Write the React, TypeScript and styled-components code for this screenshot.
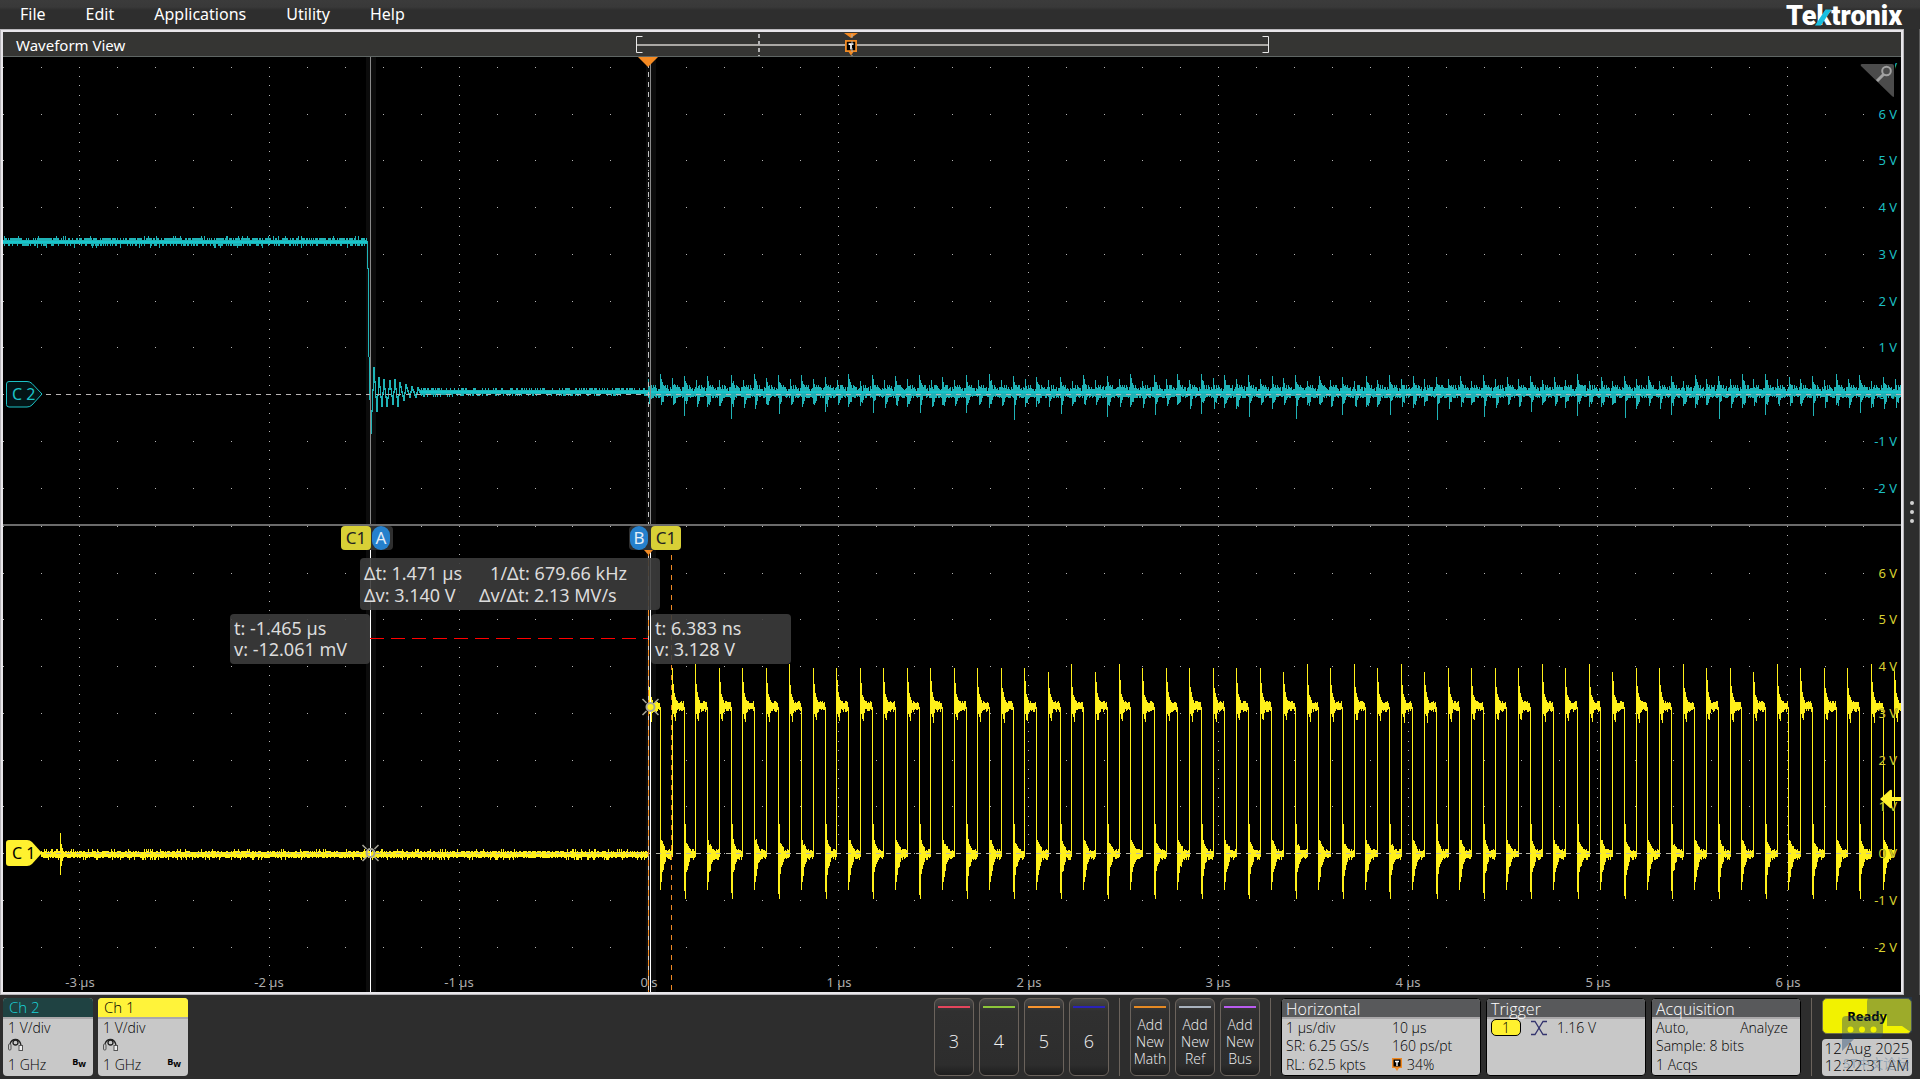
import React from "react";
import styled, { createGlobalStyle, css } from "styled-components";

/* ---------- plot geometry ---------- */

const PLOT_W = 1898;
const UPPER_H = 467;
const LOWER_H = 466;
const DIV_X = 189.8;
const DIV_Y = 46.75;
const FIRST_DIV = 76.5;
const UPPER_ZERO = 337;
const LOWER_ZERO = 327;
const TRIGGER_X = 645;
const CURSOR_A = 367;
const CURSOR_B = 647;
const BIT_PERIOD = 23.51;

const CYAN = "#1fb3b7";
const YELLOW = "#fff01a";

function makeRandom(seed: number) {
  let s = seed;
  return () => {
    s = (s * 1664525 + 1013904223) % 4294967296;
    return s / 4294967296;
  };
}

const column = (x: number, top: number, bottom: number) =>
  `M${x + 0.5} ${Math.round(top)}V${Math.round(bottom)}`;

function gridPath(height: number, zero: number, lastY: number) {
  const parts: string[] = [];
  for (let r = -9; r <= 9; r++) {
    const y = Math.round(zero - r * DIV_Y);
    if (y < 0 || y >= height - 4) continue;
    for (let i = -2; i < 50; i++) {
      const x = Math.round(FIRST_DIV + (i * DIV_X) / 5 - 0.5);
      if (x >= 0 && x < PLOT_W - 30) parts.push(`M${x} ${y + 0.5}h1`);
    }
  }
  for (let c = 0; c < 10; c++) {
    const x = Math.round(FIRST_DIV + c * DIV_X - 0.5);
    for (let k = -45; k < 45; k++) {
      const y = Math.round(zero + (k * DIV_Y) / 5);
      if (y > 0 && y < lastY) parts.push(`M${x} ${y + 0.5}h1`);
    }
  }
  return parts.join("");
}

function channelTwo() {
  const rnd = makeRandom(7);
  const fuzz: string[] = [];
  const core: string[] = [];
  for (let x = 0; x < 364; x++) {
    const up = rnd() < 0.05 ? 4 : rnd() < 0.65 ? 2 : 0;
    const down = rnd() < 0.04 ? 4 : rnd() < 0.4 ? 2 : 0;
    fuzz.push(column(x, 183 - up, 187 + down));
    core.push(column(x, 184, 186));
  }
  fuzz.push(column(364, 184, 212), column(365, 211, 300), column(366, 300, 343));
  const ring: [number, number][] = [
    [367, 343], [368, 376], [371, 311], [374, 354], [376, 321], [379, 349], [381, 323],
    [384, 349], [387, 324], [390, 347], [392, 323], [395, 349], [397, 326], [401, 343],
    [403, 328], [407, 340], [409, 330], [413, 340], [415, 331], [419, 338],
  ];
  for (let i = 1; i < ring.length; i++) {
    const [x0, y0] = ring[i - 1];
    const [x1, y1] = ring[i];
    for (let x = x0; x < x1; x++) {
      const a = y0 + ((y1 - y0) * (x - x0)) / (x1 - x0);
      const b = y0 + ((y1 - y0) * (x + 1 - x0)) / (x1 - x0);
      fuzz.push(column(x, Math.min(a, b) - 1, Math.max(a, b) + 1));
    }
  }
  for (let x = 417; x < TRIGGER_X; x++) {
    const grow = x < 450 ? 1 : 0;
    const up = rnd() < 0.4 ? 2 : 0;
    const down = rnd() < 0.3 ? 2 : 0;
    fuzz.push(column(x, 333 - up, 337 + grow + down));
    core.push(column(x, 334, 336));
  }
  const half = BIT_PERIOD / 2;
  let upPeak = 318;
  let downPeak = 351;
  let edge = -1;
  let downShift = 1;
  for (let x = TRIGGER_X; x < PLOT_W; x++) {
    const t = x - TRIGGER_X;
    const n = Math.floor(t / half);
    if (n !== edge) {
      edge = n;
      upPeak = (n % 2 ? 317 : 321) + Math.round(rnd() * 3);
      downPeak = n % 4 === 3 ? 355 + Math.round(rnd() * 8) : 347 + Math.round(rnd() * 5);
      downShift = rnd() < 0.5 ? 0 : 1;
    }
    const p = Math.floor(t - n * half);
    let top = 332 - Math.floor(rnd() * 3) - (rnd() < 0.15 ? 2 : 0);
    let bottom = 339 + Math.floor(rnd() * 3);
    if (p === 0) top = upPeak;
    if (p === 1) top = upPeak + 4 + rnd() * 4;
    if (p === 2) top = upPeak + 6 + rnd() * 5;
    if (p === 3) top = 328;
    if (p === 5) top = 328;
    if (p === 1) bottom = 344 + rnd() * 5;
    if (p === downShift) bottom = downPeak;
    if (p === 2) bottom = 344 + rnd() * 6;
    if (p === 3) bottom = 342 + rnd() * 4;
    if (p === 9) top += 3;
    fuzz.push(column(x, top, bottom));
    core.push(column(x, 334, 336));
  }
  return { fuzz: fuzz.join(""), core: core.join("") };
}

function channelOne() {
  const rnd = makeRandom(23);
  const out: string[] = [];
  for (let x = 38; x < TRIGGER_X + 1; x++) {
    const up = rnd() < 0.12 ? 3 : rnd() < 0.5 ? 1 : 0;
    const down = rnd() < 0.12 ? 3 : rnd() < 0.5 ? 1 : 0;
    out.push(column(x, 326 - up, 331 + down));
  }
  out.push(column(57, 307, 349), column(58, 318, 340), column(59, 322, 335));
  const bits = Math.ceil((PLOT_W - TRIGGER_X) / BIT_PERIOD);
  for (let b = 0; b < bits; b++) {
    const rise = Math.round(TRIGGER_X + b * BIT_PERIOD + 0.3);
    const fall = Math.round(TRIGGER_X + b * BIT_PERIOD + 12);
    const next = Math.round(TRIGGER_X + (b + 1) * BIT_PERIOD + 0.3);
    const peak = b === 0 ? 160 : b % 2 ? 142 : 138;
    out.push(column(rise, peak + (rnd() < 0.3 ? 4 : 0), 331));
    for (let x = rise + 1; x < fall; x++) {
      const p = x - rise;
      let top = 177 - Math.floor(rnd() * 3);
      let bottom = 183 + Math.floor(rnd() * 4);
      if (p === 1) { top = 154 + rnd() * 8; bottom = 188; }
      if (p === 2) { top = 166 + rnd() * 3; bottom = 190 + rnd() * 4; }
      if (p === 3) { top = 171; bottom = 194 + rnd() * 3; }
      if (p === 4) { top = 174; bottom = 187; }
      out.push(column(x, top, bottom));
    }
    const deep = b % 2 === 1;
    out.push(column(fall, 181, 364 + (deep ? rnd() * 6 : 0)));
    for (let x = fall + 1; x < next; x++) {
      const p = x - fall;
      let top = 325 - Math.floor(rnd() * 3);
      let bottom = 331 + Math.floor(rnd() * 4);
      if (p === 1) { top = deep ? 298 : 314; bottom = deep ? 373 : 356; }
      if (p === 2) { top = 313 + rnd() * 6; bottom = 345 + rnd() * 6; }
      if (p === 3) { top = 318; bottom = 340 + rnd() * 5; }
      if (p === 4) { top = 320; bottom = 337 + rnd() * 4; }
      if (p === 5) { top = 320 + rnd() * 4; bottom = 336; }
      out.push(column(x, top, bottom));
    }
  }
  return out.join("");
}

const CH2 = channelTwo();
const CH1 = channelOne();
const UPPER_GRID = gridPath(UPPER_H, UPPER_ZERO, UPPER_H);
const LOWER_GRID = gridPath(LOWER_H, LOWER_ZERO, 464);

/* ---------- shell ---------- */

const GlobalStyle = createGlobalStyle`
  * { box-sizing: border-box; }
  body {
    margin: 0;
    background: #2d2d2d;
    font-family: "Noto Sans", "Open Sans", sans-serif;
    color: #fff;
  }
  button { font: inherit; color: inherit; border: 0; background: none; padding: 0; cursor: pointer; }
`;

const Screen = styled.div`
  display: flex;
  flex-direction: column;
  min-height: 100vh;
`;

const MenuBar = styled.header`
  display: flex;
  align-items: flex-start;
  justify-content: space-between;
  height: 29px;
  padding: 0 16px 0 20px;
  background: linear-gradient(#3b3b3b 0, #393939 7px, #2e2e2e 10px);
`;

const Menu = styled.nav`
  display: flex;
  gap: 40px;
`;

const MenuButton = styled.button`
  font-size: 16px;
  line-height: 28px;
`;

const Logo = styled.svg`
  display: block;
  width: 118px;
  height: 29px;
  overflow: visible;
  font: 900 27px Roboto, sans-serif;
  fill: #fff;
`;

const Workspace = styled.div`
  flex: 1;
  display: flex;
`;

const Frame = styled.main`
  flex: 1;
  display: flex;
  flex-direction: column;
  padding: 2px;
  border: 1px solid #b9b7bb;
  background: #e8e6ea;
`;

const SideHandle = styled.button`
  display: flex;
  flex-direction: column;
  align-items: center;
  justify-content: center;
  gap: 5px;
  width: 16px;
  border-right: 1px solid #5c5c5c;
`;

const HandleDot = styled.span`
  width: 4px;
  height: 4px;
  border-radius: 2px;
  background: #d0d0d0;
`;

const TitleBar = styled.div`
  display: grid;
  grid-template-columns: 633fr 633fr 632fr;
  align-items: center;
  height: 25px;
  background: #353533;
  border-bottom: 1px solid #5f6664;
`;

const Title = styled.h1`
  margin: 0;
  padding: 2px 0 0 13px;
  font-size: 15px;
  font-weight: 400;
  line-height: 22px;
`;

const Overview = styled.svg`
  display: block;
  width: 100%;
  height: 24px;
`;

const Plots = styled.div`
  flex: 1;
  display: grid;
  grid-template-rows: ${UPPER_H}fr ${LOWER_H}fr;
  row-gap: 2px;
  background: #6b6b6b;
`;

const Plot = styled.section`
  position: relative;
  background: #000;
`;

const Trace = styled.svg`
  position: absolute;
  inset: 0;
  width: 100%;
  height: 100%;
  font-family: "Noto Sans", sans-serif;
  font-size: 13px;
`;

/* ---------- items placed on the plot canvas ---------- */

const at = css<{ $x: number; $y: number; $h: number }>`
  position: absolute;
  left: ${(p) => (p.$x / PLOT_W) * 100}%;
  top: ${(p) => (p.$y / p.$h) * 100}%;
`;

const ZoomCorner = styled.button`
  ${at}
  width: 35px;
  padding-top: 6px;
  background: #000;

  svg { display: block; }
`;

const CursorTag = styled.div`
  ${at}
  display: flex;
  height: 24px;
  border-radius: 4px;
  background: #2f2f2f;
`;

const SourceLabel = styled.span`
  width: 30px;
  border-radius: 4px;
  background: #d8d036;
  color: #222;
  font-size: 17px;
  line-height: 23px;
  text-align: center;
`;

const CursorName = styled.span`
  width: 18px;
  height: 24px;
  margin: 0 3px 0 1px;
  border-radius: 9px;
  background: #2580cc;
  color: #e4eef8;
  font-size: 17px;
  line-height: 24px;
  text-align: center;
`;

const Readout = styled.div<{ $w: number }>`
  ${at}
  width: ${(p) => p.$w}px;
  padding: 4px;
  border-radius: 4px;
  background: rgba(60, 60, 60, 0.9);
  color: #dcdcdc;
  font-size: 18px;
  line-height: 21px;
  white-space: pre;
`;

const DeltaReadout = styled(Readout)`
  line-height: 22px;
`;

/* ---------- settings bar ---------- */

const SettingsBar = styled.footer`
  display: flex;
  justify-content: space-between;
  height: 84px;
  padding: 3px 8px 3px 3px;
  font-family: "Open Sans", "Noto Sans", sans-serif;
  font-weight: 300;
`;

const Group = styled.div<{ $gap: number }>`
  display: flex;
  gap: ${(p) => p.$gap}px;
`;

const Rule = styled.span`
  width: 1px;
  background: #6b635c;
`;

const ChannelBadge = styled.button`
  width: 90px;
  overflow: hidden;
  display: flex;
  flex-direction: column;
  border-radius: 4px;
  background: #c8c8c8;
  color: #000;
  font-size: 15px;
  line-height: 19px;
  text-align: left;
`;

const ChannelName = styled.span<{ $bg: string; $fg: string }>`
  display: block;
  width: 100%;
  height: 21px;
  padding-left: 6px;
  border-bottom: 2px solid #aaa8aa;
  background: ${(p) => p.$bg};
  color: ${(p) => p.$fg};
`;

const ChannelBody = styled.span`
  flex: 1;
  display: grid;
  grid-template-columns: 1fr auto;
  grid-template-rows: 17px 18px 20px;
  align-items: center;
  padding: 0 7px 0 5px;
  width: 100%;
  font-size: 14px;

  svg { display: block; grid-column: 1 / 3; }
  span:first-child { grid-column: 1 / 3; }
`;

const Bandwidth = styled.b`
  font-size: 9px;
  font-weight: 700;
  line-height: 16px;
  align-self: start;

  sub { font-size: 9px; line-height: 0; vertical-align: -2px; }
`;

const SlotButton = styled.button<{ $bar: string }>`
  display: flex;
  flex-direction: column;
  align-items: center;
  width: 40px;
  padding: 7px 0 0;
  border: 1px solid #6b635c;
  border-radius: 6px;
  background: linear-gradient(#474747 0, #303030 12px, #2d2d2d 66px, #1e1e1e 100%);
  color: #f2f2f2;

  &::before {
    content: "";
    flex: none;
    width: 32px;
    height: 2px;
    background: ${(p) => p.$bar};
  }
`;

const SlotNumber = styled.span`
  font-size: 18px;
  line-height: 67px;
`;

const SlotText = styled.span`
  padding-top: 8px;
  font-size: 14px;
  line-height: 17px;
`;

const Panel = styled.button<{ $w: number }>`
  display: flex;
  flex-direction: column;
  width: ${(p) => p.$w}px;
  overflow: hidden;
  border: 1px solid #000;
  border-radius: 4px;
  background: #c8c8c8;
  color: #000;
  text-align: left;
`;

const PanelTitle = styled.span`
  display: block;
  width: 100%;
  height: 20px;
  padding-left: 4px;
  border-bottom: 2px solid #aaa8aa;
  background: #58595b;
  color: #fff;
  font-size: 16px;
  line-height: 20px;
`;

const PanelBody = styled.span<{ $cols: string }>`
  display: grid;
  grid-template-columns: ${(p) => p.$cols};
  grid-template-rows: 17px 19px 19px;
  align-items: center;
  width: 100%;
  padding: 0 12px 0 4px;
  font-size: 14px;
  line-height: 19px;
`;

const WideCell = styled.span`
  grid-column: 1 / -1;
`;

const Inline = styled.span`
  display: flex;
  align-items: center;
  gap: 5px;
`;

const SourcePill = styled.span`
  height: 17px;
  border: 1px solid #000;
  border-radius: 5px;
  background: #fff12f;
  line-height: 15px;
  text-align: center;
`;

const Status = styled.div`
  position: relative;
  display: flex;
  flex-direction: column;
  gap: 5px;
  width: 90px;
`;

const ReadyButton = styled.button`
  height: 36px;
  border: 1px solid #6f6f4a;
  border-radius: 5px;
  background: #f2f200;
  color: #000;
  font-family: "Noto Sans", sans-serif;
  font-size: 13px;
  font-weight: 700;
`;

const Clock = styled.time`
  flex: 1;
  border-radius: 4px;
  background: #c8c8c8;
  color: #000;
  font-size: 15px;
  line-height: 17px;
  padding-top: 1px;
  text-align: center;
  white-space: nowrap;
`;

const Watermark = styled.svg`
  position: absolute;
  inset: -1px 0 auto;
  width: 90px;
  height: 80px;
  pointer-events: none;
  font: 400 13px "Noto Sans", "Noto Sans CJK SC", sans-serif;
`;

/* ---------- pieces ---------- */

const TMark = ({ x, y, scale = 1 }: { x: number; y: number; scale?: number }) => (
  <g transform={`translate(${x} ${y}) scale(${scale})`}>
    <path d="M0 0h10v10h-3l-2 3-2-3h-3z" fill="#f08a24" />
    <path d="M1.5 1.5h7v7h-7z" fill="#000" />
    <path d="M3 3.5h4M5 3v5" stroke="#fff" strokeWidth="1.4" />
  </g>
);

const CursorHit = ({ x, y, fill }: { x: number; y: number; fill: string }) => (
  <g stroke="#a9a79a" strokeWidth="2" fill={fill}>
    <path d={`M${x - 8} ${y - 8}l4 4M${x + 8} ${y - 8}l-4 4M${x - 8} ${y + 8}l4-4M${x + 8} ${y + 8}l-4-4`} strokeWidth="1.500" />
    <circle cx={x} cy={y} r="4" />
  </g>
);

const VoltLabels = ({ zero, color, from }: { zero: number; color: string; from: number }) => (
  <g fill={color} textAnchor="end">
    {Array.from({ length: from + 3 }, (_, i) => from - i).map((v) => (
      <text key={v} x={PLOT_W - 4} y={Math.round(zero - v * DIV_Y) + 5}>{`${v} V`}</text>
    ))}
  </g>
);

const ProbeIcon = () => (
  <svg width="16" height="14" viewBox="0 0 16 14" fill="none" stroke="#222">
    <path d="M2 6C3 2.500 5 1.500 7.500 1.500S12 3 13 7" strokeWidth="1.300" />
    <circle cx="7.500" cy="4.500" r="2.500" strokeWidth="1.300" />
    <rect x="0.500" y="6" width="2.500" height="6" rx="1" stroke="#555" />
    <rect x="11" y="7.500" width="3.500" height="5" stroke="#555" fill="#eee" />
  </svg>
);

const Channel = ({ name, bg, fg }: { name: string; bg: string; fg: string }) => (
  <ChannelBadge type="button">
    <ChannelName $bg={bg} $fg={fg}>{name}</ChannelName>
    <ChannelBody>
      <span>1 V/div</span>
      <ProbeIcon />
      <span>1 GHz</span>
      <Bandwidth>B<sub>w</sub></Bandwidth>
    </ChannelBody>
  </ChannelBadge>
);

const slots = [
  { n: "3", bar: "#e2455c" },
  { n: "4", bar: "#8cc63a" },
  { n: "5", bar: "#f7942f" },
  { n: "6", bar: "#2a22b8" },
];

const adders = [
  { n: "Math", bar: "#e58a24" },
  { n: "Ref", bar: "#a9b3bf" },
  { n: "Bus", bar: "#b95cf0" },
];

const UpperPlot = () => (
  <Plot aria-label="Channel 2">
    <Trace viewBox={`0 0 ${PLOT_W} ${UPPER_H}`} preserveAspectRatio="none">
      <g shapeRendering="crispEdges">
        <path d={`M${CURSOR_A - 4} 0h10v${UPPER_H}h-10zM${CURSOR_B - 4} 0h10v${UPPER_H}h-10z`} fill="#0c0c0c" />
        <path d={UPPER_GRID} stroke="#b4b4b4" />
      </g>
      <VoltLabels zero={UPPER_ZERO} color="#1cbfc2" from={7} />
      <g shapeRendering="crispEdges">
        <path d={CH2.fuzz} stroke={CYAN} />
        <path d={CH2.core} stroke="#18c6cc" />
        <path d={`M43 ${UPPER_ZERO + 0.5}H${PLOT_W}`} stroke="#b9b5b5" strokeDasharray="5 5" />
        <path d={`M${TRIGGER_X + 0.5} 5V${UPPER_H}`} stroke="#c4c4c4" strokeDasharray="5 5" />
        <path d={`M${CURSOR_A + 0.5} 0V${UPPER_H}M${CURSOR_B + 0.5} 0V${UPPER_H}`} stroke="#8a8a8a" />
      </g>
      <path d="M635 0h20l-10 10z" fill="#f58a22" />
      <path d="M6 324.500h18q3 0 5 2l10 10.500-10 11q-2 2-5 2h-18q-2.500 0-2.500-2.500v-20.500q0-2.500 2.500-2.500z" fill="#031416" stroke="#1cc2c6" />
      <text x="9" y="343" fontSize="16" fill="#1cc2c6">C 2</text>
    </Trace>
    <ZoomCorner type="button" aria-label="Zoom" $x={1857} $y={0} $h={UPPER_H}>
      <svg width="35" height="35" viewBox="0 0 35 35" fill="none">
        <path d="M2 1h30q2 0 2 2v30q0 2-2 0L1 3q-1-2 1-2z" fill="#4b4b4b" />
        <circle cx="26.500" cy="8" r="4.300" stroke="#a2a2a2" strokeWidth="2" />
        <path d="M23.500 11.500L17 18" stroke="#a2a2a2" strokeWidth="3" />
      </svg>
    </ZoomCorner>
  </Plot>
);

const LowerPlot = () => (
  <Plot aria-label="Channel 1">
    <Trace viewBox={`0 0 ${PLOT_W} ${LOWER_H}`} preserveAspectRatio="none">
      <g shapeRendering="crispEdges">
        <path d={`M${CURSOR_A - 4} 0h10v${LOWER_H}h-10zM${CURSOR_B - 4} 0h10v${LOWER_H}h-10z`} fill="#0c0c0c" />
        <path d={LOWER_GRID} stroke="#b4b4b4" />
        <path d={CH1} stroke={YELLOW} />
        <path d={`M43 ${LOWER_ZERO + 0.5}H${PLOT_W - 30}`} stroke="#b5b5a8" strokeDasharray="5 5" />
        <path d={`M${TRIGGER_X + 0.5} 24V${LOWER_H}`} stroke="#f08a24" strokeDasharray="6 4" />
        <path d={`M${TRIGGER_X + 0.5} 30V${LOWER_H}`} stroke="#d8d0c8" strokeDasharray="4 6" />
        <path d={`M668.500 29V${LOWER_H}`} stroke="#f08a24" strokeDasharray="5 5" />
        <path d={`M${CURSOR_A + 0.5} 0V${LOWER_H}M${CURSOR_B + 0.5} 0V${LOWER_H}`} stroke="#fff" />
        <path d={`M${CURSOR_A} 112.500H${TRIGGER_X}`} stroke="#ff0000" strokeDasharray="14 7" />
      </g>
      <g stroke="#000" strokeOpacity="0.5" paintOrder="stroke">
        <VoltLabels zero={LOWER_ZERO} color="#d9d130" from={6} />
      </g>
      <g fill="#adadad" textAnchor="middle">
        {Array.from({ length: 10 }, (_, i) => i - 3).map((t) => (
          <text key={t} x={Math.round(FIRST_DIV + (t + 3) * DIV_X)} y={461}>{t === 0 ? "0 s" : `${t} µs`}</text>
        ))}
      </g>
      <CursorHit x={CURSOR_A + 0.5} y={LOWER_ZERO} fill="none" />
      <CursorHit x={CURSOR_B + 0.5} y={181} fill="#fff01a" />
      <path d="M641 24h9l-4.500 5z" fill="#f08a24" />
      <path d="M1877 273l10-9q2-1 2 1v6h9v4h-9v6q0 2-2 1z" fill="#fff12f" />
      <path d="M6 314h18q3 0 5 2l10 11-10 11q-2 2-5 2h-18q-3 0-3-3v-20q0-3 3-3z" fill="#fff12f" />
      <text x="9" y="333" fontSize="16" fill="#000">C 1</text>
    </Trace>
    <CursorTag $x={338} $y={0} $h={LOWER_H}>
      <SourceLabel>C1</SourceLabel>
      <CursorName>A</CursorName>
    </CursorTag>
    <CursorTag $x={626} $y={0} $h={LOWER_H}>
      <CursorName>B</CursorName>
      <SourceLabel>C1</SourceLabel>
    </CursorTag>
    <DeltaReadout $x={357} $y={32} $h={LOWER_H} $w={300}>
      {"Δt: 1.471 µs      1/Δt: 679.66 kHz\nΔv: 3.140 V     Δv/Δt: 2.13 MV/s"}
    </DeltaReadout>
    <Readout $x={227} $y={88} $h={LOWER_H} $w={140}>{"t: -1.465 µs\nv: -12.061 mV"}</Readout>
    <Readout $x={648} $y={88} $h={LOWER_H} $w={140}>{"t: 6.383 ns\nv: 3.128 V"}</Readout>
  </Plot>
);

export default function App() {
  return (
    <Screen>
      <GlobalStyle />
      <MenuBar>
        <Menu>
          {["File", "Edit", "Applications", "Utility", "Help"].map((m) => (
            <MenuButton key={m} type="button">{m}</MenuButton>
          ))}
        </Menu>
        <Logo viewBox="0 0 118 29" role="img" aria-label="Tektronix">
          <text x="0" y="25">Tektronix</text>
          <path d="M29 25.500L39.500 9.500h6L35 25.500z" fill="#18bfe0" />
        </Logo>
      </MenuBar>

      <Workspace>
        <Frame>
          <TitleBar>
            <Title>Waveform View</Title>
            <Overview viewBox="0 0 633 24" preserveAspectRatio="none">
              <path d="M1 13h631" stroke="#aaa8a4" strokeWidth="2" />
              <path d="M6.500 4.500h-6v16h6M626.500 4.500h6v16h-6" fill="none" stroke="#e8e8e8" />
              <path d="M123 2v22" stroke="#b4b4b4" strokeWidth="2" strokeDasharray="4 3" />
              <path d="M208 1h14l-7 5z" fill="#f58a22" />
              <TMark x={209} y={8} scale={1.2} />
              <path d="M216 2v22" stroke="#b4b4b4" strokeWidth="1" strokeDasharray="4 3" />
            </Overview>
            <span />
          </TitleBar>
          <Plots>
            <UpperPlot />
            <LowerPlot />
          </Plots>
        </Frame>
        <SideHandle type="button" aria-label="Results bar">
          <HandleDot />
          <HandleDot />
          <HandleDot />
        </SideHandle>
      </Workspace>

      <SettingsBar>
        <Group $gap={5}>
          <Channel name="Ch 2" bg="#1f4242" fg="#19d3d8" />
          <Channel name="Ch 1" bg="#fff33a" fg="#000" />
        </Group>
        <Group $gap={10}>
          <Group $gap={5}>
            {slots.map((s) => (
              <SlotButton key={s.n} type="button" $bar={s.bar}>
                <SlotNumber>{s.n}</SlotNumber>
              </SlotButton>
            ))}
          </Group>
          <Rule />
          <Group $gap={5}>
            {adders.map((s) => (
              <SlotButton key={s.n} type="button" $bar={s.bar}>
                <SlotText>Add<br />New<br />{s.n}</SlotText>
              </SlotButton>
            ))}
          </Group>
          <Rule />
          <Group $gap={5}>
            <Panel type="button" $w={200}>
              <PanelTitle>Horizontal</PanelTitle>
              <PanelBody $cols="106px 1fr">
                <span>1 µs/div</span>
                <span>10 µs</span>
                <span>SR: 6.25 GS/s</span>
                <span>160 ps/pt</span>
                <span>RL: 62.5 kpts</span>
                <Inline>
                  <svg width="10" height="13" viewBox="0 0 10 13"><TMark x={0} y={0} /></svg>
                  34%
                </Inline>
              </PanelBody>
            </Panel>
            <Panel type="button" $w={160}>
              <PanelTitle>Trigger</PanelTitle>
              <PanelBody $cols="30px 36px 1fr">
                <SourcePill>1</SourcePill>
                <svg width="36" height="16" viewBox="0 0 36 16" fill="none" stroke="#34346e" strokeWidth="1.300">
                  <path d="M10 1.500h4l8 13h4M10 14.500h4l8-13h4" />
                </svg>
                <span>1.16 V</span>
              </PanelBody>
            </Panel>
            <Panel type="button" $w={150}>
              <PanelTitle>Acquisition</PanelTitle>
              <PanelBody $cols="1fr auto">
                <span>Auto,</span>
                <span>Analyze</span>
                <WideCell>Sample: 8 bits</WideCell>
                <WideCell>1 Acqs</WideCell>
              </PanelBody>
            </Panel>
          </Group>
          <Rule />
          <Status>
            <ReadyButton type="button">Ready</ReadyButton>
            <Clock>12 Aug 2025<br />12:22:31 AM</Clock>
            <Watermark viewBox="0 0 90 80">
              <path d="M50 0H90V36L80 29H65V18H45V5Q45 0 50 0z" fill="#1f4068" fillOpacity="0.400" />
              <path fillRule="evenodd" d="M24 19H61V36Q61 41 56 41H33L20 54V23Q20 19 24 19zM25.500 32.500a3 3 0 1 0 6 0 3 3 0 1 0-6 0zM37 32.500a3 3 0 1 0 6 0 3 3 0 1 0-6 0zM48.500 32.500a3 3 0 1 0 6 0 3 3 0 1 0-6 0z" fill="#1f4068" fillOpacity="0.400" />
              <text x="21" y="71" fill="#5a7a9c" fillOpacity="0.450">ST中文论坛</text>
            </Watermark>
          </Status>
        </Group>
      </SettingsBar>
    </Screen>
  );
}
